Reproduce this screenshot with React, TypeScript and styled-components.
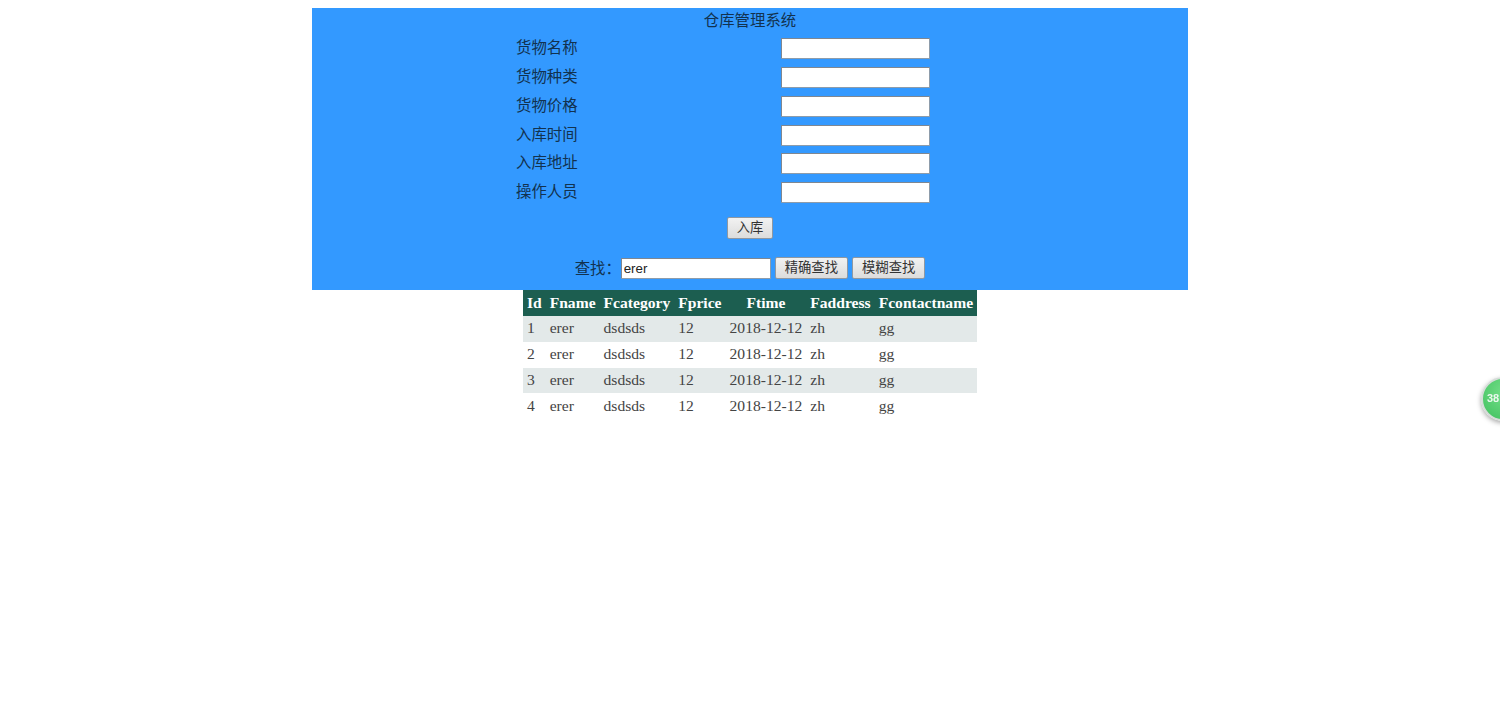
import React from "react";
import styled, { createGlobalStyle } from "styled-components";

const GlobalStyle = createGlobalStyle`
	html,
	body {
		margin: 0;
		padding: 0;
		background: #fff;
		overflow: hidden;
	}
	body {
		padding-top: 8px;
		font-family: "Liberation Serif", "Noto Sans CJK SC", serif;
		font-size: 16px;
		color: #000;
	}
`;

const Panel = styled.div`
	width: 876px;
	height: 282px;
	margin: 0 auto;
	background-color: #3399ff;
	box-sizing: border-box;
	font-size: 15.4px;
	color: #12324f;
`;

const Title = styled.div`
	height: 24px;
	padding-top: 3px;
	line-height: 20px;
	box-sizing: border-box;
	text-align: center;
`;

const FormGrid = styled.div`
	display: grid;
	grid-template-columns: 265px 150px;
	grid-auto-rows: 28.8px;
	padding: 2.2px 0 0 204px;
`;

const Label = styled.label`
	line-height: 27px;
`;

const TextInput = styled.input<{ $flush?: boolean }>`
	width: ${(p) => (p.$flush ? "150px" : "149px")};
	height: 21px;
	margin-top: ${(p) => (p.$flush ? "1px" : "4px")};
	padding: 1px 2px;
	box-sizing: border-box;
	background: #fff;
	border: 1px solid #8d9cab;
	border-top-color: #7f8791;
	border-left-color: #7f8791;
	border-radius: 1px;
	font-family: "Liberation Sans", "Noto Sans CJK SC", sans-serif;
	font-size: 13.33px;
	color: #222;
	outline: none;
`;

const SubmitRow = styled.div`
	display: flex;
	justify-content: center;
	margin-top: 10px;
`;

const Button = styled.button`
	height: 22px;
	padding: 1px 9px 0;
	background: linear-gradient(#f2f2f2, #dcdcdc);
	border: 1px solid #8f98a2;
	border-radius: 2px;
	font-family: "Liberation Sans", "Noto Sans CJK SC", sans-serif;
	font-size: 13.33px;
	line-height: 18px;
	color: #333;
`;

const SearchRow = styled.div`
	display: flex;
	justify-content: center;
	align-items: center;
	gap: 4px;
	margin-top: 18px;
	height: 22px;
`;

const SearchLabel = styled.span`
	width: 46px;
	margin-right: -4px;
	margin-top: -1px;
	white-space: nowrap;
`;

const DataTable = styled.table`
	margin: 0 auto;
	border-collapse: collapse;
	font-size: 15.6px;
	line-height: 17.85px;
	color: #444;
`;

const HeadCell = styled.th<{ $center?: boolean }>`
	padding: 4px;
	background-color: #1c5e50;
	color: #fff;
	font-weight: bold;
	text-align: ${(p) => (p.$center ? "center" : "left")};
	white-space: nowrap;
`;

const Row = styled.tr<{ $shaded: boolean }>`
	background-color: ${(p) => (p.$shaded ? "#e3e9e9" : "#fff")};
`;

const Cell = styled.td`
	padding: 3.5px 4px 4.5px;
	white-space: nowrap;
`;

const FloatBall = styled.div`
	position: fixed;
	left: 1481px;
	top: 377px;
	width: 44px;
	height: 44px;
	box-sizing: border-box;
	border-radius: 50%;
	border: 2px solid #d5dcd8;
	background: radial-gradient(circle at 55% 35%, #74e08a, #3fbf5d);
	box-shadow: 0 2px 5px rgba(0, 0, 0, 0.35);
	color: #eaf8ee;
	font-family: "Liberation Sans", sans-serif;
	font-size: 11px;
	font-weight: bold;
	line-height: 39px;
	padding-left: 4px;
`;

const fields = ["货物名称", "货物种类", "货物价格", "入库时间", "入库地址", "操作人员"];
const heads = ["Id", "Fname", "Fcategory", "Fprice", "Ftime", "Faddress", "Fcontactname"];
const rows = [1, 2, 3, 4];

export default function App() {
	return (
		<>
			<GlobalStyle />
			<Panel>
				<Title>仓库管理系统</Title>
				<FormGrid>
					{fields.map((name) => (
						<React.Fragment key={name}>
							<Label>{name}</Label>
							<TextInput />
						</React.Fragment>
					))}
				</FormGrid>
				<SubmitRow>
					<Button>入库</Button>
				</SubmitRow>
				<SearchRow>
					<SearchLabel>查找：</SearchLabel>
					<TextInput $flush defaultValue="erer" />
					<Button>精确查找</Button>
					<Button>模糊查找</Button>
				</SearchRow>
			</Panel>
			<DataTable>
				<thead>
					<tr>
						{heads.map((h) => (
							<HeadCell key={h} $center={h === "Ftime"}>
								{h}
							</HeadCell>
						))}
					</tr>
				</thead>
				<tbody>
					{rows.map((id) => (
						<Row key={id} $shaded={id % 2 === 1}>
							<Cell>{id}</Cell>
							<Cell>erer</Cell>
							<Cell>dsdsds</Cell>
							<Cell>12</Cell>
							<Cell>2018-12-12</Cell>
							<Cell>zh</Cell>
							<Cell>gg</Cell>
						</Row>
					))}
				</tbody>
			</DataTable>
			<FloatBall>38</FloatBall>
		</>
	);
}
